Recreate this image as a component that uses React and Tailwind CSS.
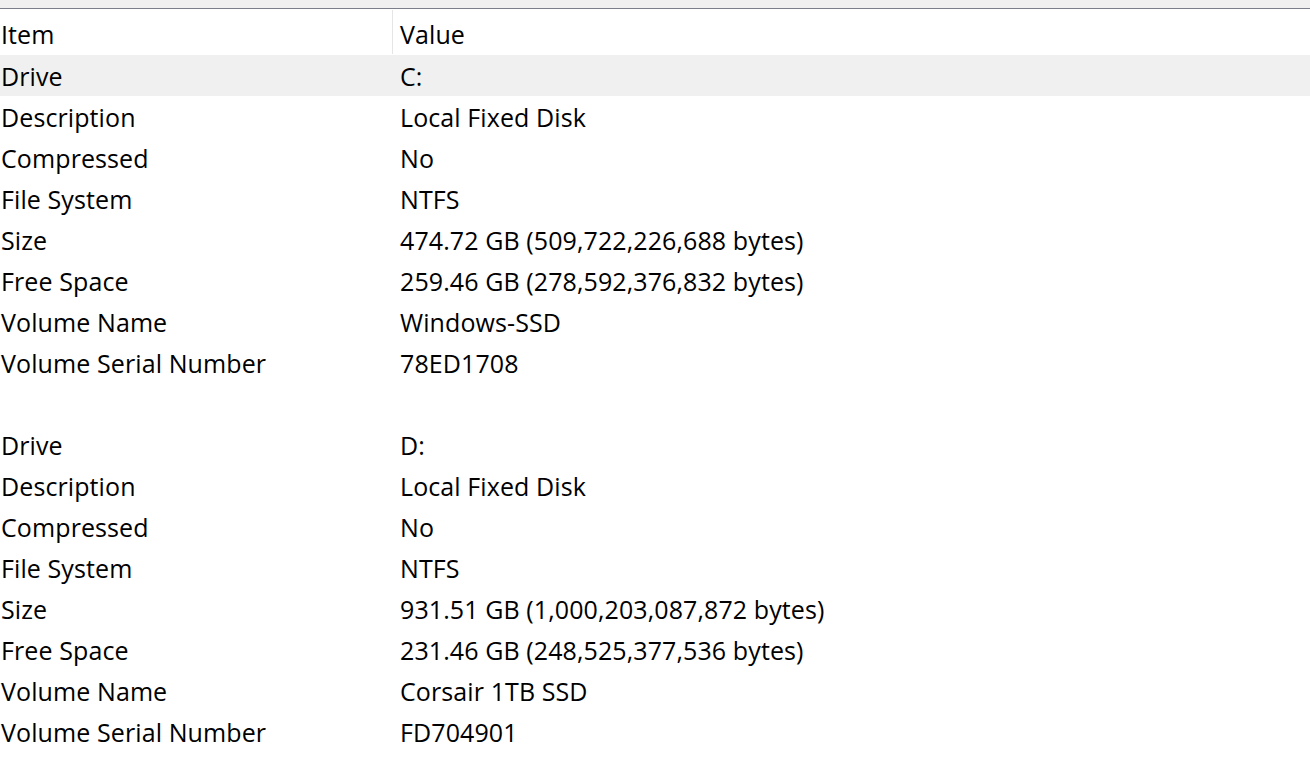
const rows1=[["Drive","C:"],["Description","Local Fixed Disk"],["Compressed","No"],["File System","NTFS"],["Size","474.72 GB (509,722,226,688 bytes)"],["Free Space","259.46 GB (278,592,376,832 bytes)"],["Volume Name","Windows-SSD"],["Volume Serial Number","78ED1708"],["",""],["Drive","D:"],["Description","Local Fixed Disk"],["Compressed","No"],["File System","NTFS"],["Size","931.51 GB (1,000,203,087,872 bytes)"],["Free Space","231.46 GB (248,525,377,536 bytes)"],["Volume Name","Corsair 1TB SSD"],["Volume Serial Number","FD704901"]];
export default function App(){
return <div className="w-[1310px] h-[760px] bg-white text-black overflow-hidden text-[25px] tracking-[0.1px]" style={{fontFamily:'"Open Sans","Noto Sans",sans-serif'}}>
<div className="h-[8px] bg-[#f0f0f0] border-b border-[#7a7f8a] box-content"></div>
<div className="flex h-[46px] items-center">
<div className="w-[393px] pl-[1px] border-r border-[#e5e5e5] h-[44px] flex items-center pt-[6px]">Item</div>
<div className="pl-[7px] pt-[6px]">Value</div>
</div>
{rows1.map((r,i)=><div key={i} className={"flex h-[41px] items-center pt-[3px] "+(i===0?"bg-[#f0f0f0]":"")}>
<div className="w-[400px] pl-[1px]">{r[0]}</div><div>{r[1]}</div></div>)}
</div>}
